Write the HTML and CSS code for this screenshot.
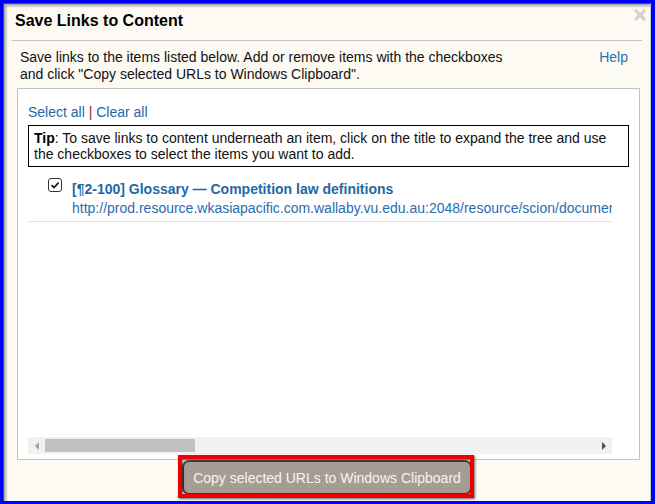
FILE: index.html
```html
<!DOCTYPE html>
<html lang="en">
<head>
<meta charset="utf-8">
<title>Save Links to Content</title>
<link rel="stylesheet" href="styles.css">
</head>
<body>
<div class="dialog">
  <div class="header">
    <h1 class="title">Save Links to Content</h1>
    <span class="close" aria-label="Close"><svg width="12" height="12" viewBox="0 0 12 12"><path d="M2 2L10 10M10 2L2 10" stroke="#d4d4d4" stroke-width="3.2" stroke-linecap="square"/></svg></span>
  </div>
  <div class="sep"></div>
  <div class="intro">
    <p class="intro-text">Save links to the items listed below. Add or remove items with the checkboxes and click "Copy selected URLs to Windows Clipboard".</p>
    <a class="help">Help</a>
  </div>
  <div class="panel">
    <div class="select"><a class="lnk">Select all</a> <span class="bar">|</span> <a class="lnk">Clear all</a></div>
    <div class="tip"><b>Tip</b>: To save links to content underneath an item, click on the title to expand the tree and use the checkboxes to select the items you want to add.</div>
    <div class="list">
      <div class="item">
        <span class="cb"><svg width="14" height="14" viewBox="0 0 14 14"><rect x="0.5" y="0.5" width="13" height="13" rx="2.5" fill="#fff" stroke="#333"/><path d="M3.5 7.2L6 9.6L10.6 4.6" fill="none" stroke="#111" stroke-width="1.6"/></svg></span>
        <div class="item-text">
          <a class="item-title">[¶2-100] Glossary — Competition law definitions</a>
          <a class="item-url">http://prod.resource.wkasiapacific.com.wallaby.vu.edu.au:2048/resource/scion/document/default/glossary</a>
        </div>
      </div>
    </div>
    <div class="hscroll">
      <span class="arrow left"></span>
      <span class="track"><span class="thumb"></span></span>
      <span class="arrow right"></span>
    </div>
  </div>
  <div class="footer">
    <span class="btn-wrap"><button class="btn">Copy selected URLs to Windows Clipboard</button></span>
  </div>
</div>
</body>
</html>
```

FILE: styles.css
```css
* { box-sizing: border-box; }
html, body { margin: 0; padding: 0; }
body {
  background: #0000ff;
  width: 655px;
  height: 504px;
  padding: 3px 4px 3px 3px;
  font-family: "Liberation Sans", Arial, sans-serif;
  font-size: 14px;
  color: #111;
}
.dialog {
  width: 648px;
  height: 498px;
  background: #fdfaf3;
  border-left: 1px solid #4a4a4a;
  border-top: 1px solid #4a4a4a;
  border-right: 1px solid #c8c8c8;
  box-shadow: inset 3px 3px 3px -1px rgba(0,0,0,0.35);
  display: flex;
  flex-direction: column;
}
.header {
  height: 36px;
  display: flex;
  justify-content: space-between;
  align-items: center;
  padding: 0 4px 3px 11px;
}
.title {
  margin: 0;
  font-size: 16px;
  font-weight: bold;
  color: #000;
}
.close {
  align-self: flex-start;
  margin-top: 5px;
  display: flex;
}
.sep {
  height: 1px;
  background: #c4c4c4;
  margin: 0 8px;
}
.intro {
  display: flex;
  justify-content: space-between;
  padding: 8px 22px 0 16px;
}
.intro-text {
  margin: 0;
  width: 492px;
  line-height: 17px;
}
.help {
  color: #2a72b5;
  line-height: 17px;
}
.panel {
  margin: 5px 10px 0 13px;
  height: 372px;
  background: #fff;
  border: 1px solid #c3c3c3;
  padding: 15px 10px 5px 10px;
  display: flex;
  flex-direction: column;
}
.select {
  line-height: 17px;
}
.lnk { color: #2368a8; }
.bar { color: #7a1f4a; }
.tip {
  margin-top: 4px;
  border: 1px solid #000;
  padding: 4px 5px 4px 5px;
  line-height: 16px;
  color: #111;
}
.tip b { color: #000; }
.list {
  flex: 1;
  width: 584px;
  overflow: hidden;
  padding-top: 13px;
}
.item {
  display: flex;
  align-items: flex-start;
  border-bottom: 1px solid #dde2e8;
  padding-bottom: 3px;
}
.cb {
  display: flex;
  margin: -2px 10px 0 20px;
}
.item-text {
  display: flex;
  flex-direction: column;
  white-space: nowrap;
  min-width: 0;
}
.item-title {
  font-weight: bold;
  color: #1d6aa5;
  line-height: 18px;
}
.item-url {
  color: #2a6cb0;
  line-height: 20px;
}
.hscroll {
  width: 584px;
  height: 17px;
  background: #f1f1f1;
  display: flex;
  align-items: center;
}
.arrow {
  width: 17px;
  height: 17px;
  display: flex;
  align-items: center;
  justify-content: center;
}
.arrow::before {
  content: "";
  border-top: 4px solid transparent;
  border-bottom: 4px solid transparent;
}
.arrow.left::before { border-right: 4px solid #a3a3a3; }
.arrow.right::before { border-left: 4px solid #505050; }
.track {
  flex: 1;
  height: 17px;
  display: flex;
  align-items: center;
}
.thumb {
  width: 150px;
  height: 13px;
  background: #c1c1c1;
}
.footer {
  display: flex;
  justify-content: center;
  padding-top: 2px;
}
.btn-wrap {
  position: relative;
  display: inline-flex;
}
.btn-wrap::after {
  content: "";
  position: absolute;
  top: -7px;
  left: -6px;
  right: -4px;
  bottom: -5px;
  border: 4px solid #ee0000;
  box-shadow: 1px 1px 2px rgba(0,0,0,0.6), inset 1px 1px 2px rgba(0,0,0,0.5);
  pointer-events: none;
}
.btn {
  font-family: "Liberation Sans", Arial, sans-serif;
  font-size: 14px;
  color: #f6f4f0;
  background: #a59d94;
  border: none;
  border-radius: 5px;
  height: 31px;
  width: 286px;
  padding: 0;
  box-shadow: 0 0 1px 2px #3a3a3a;
}
```
